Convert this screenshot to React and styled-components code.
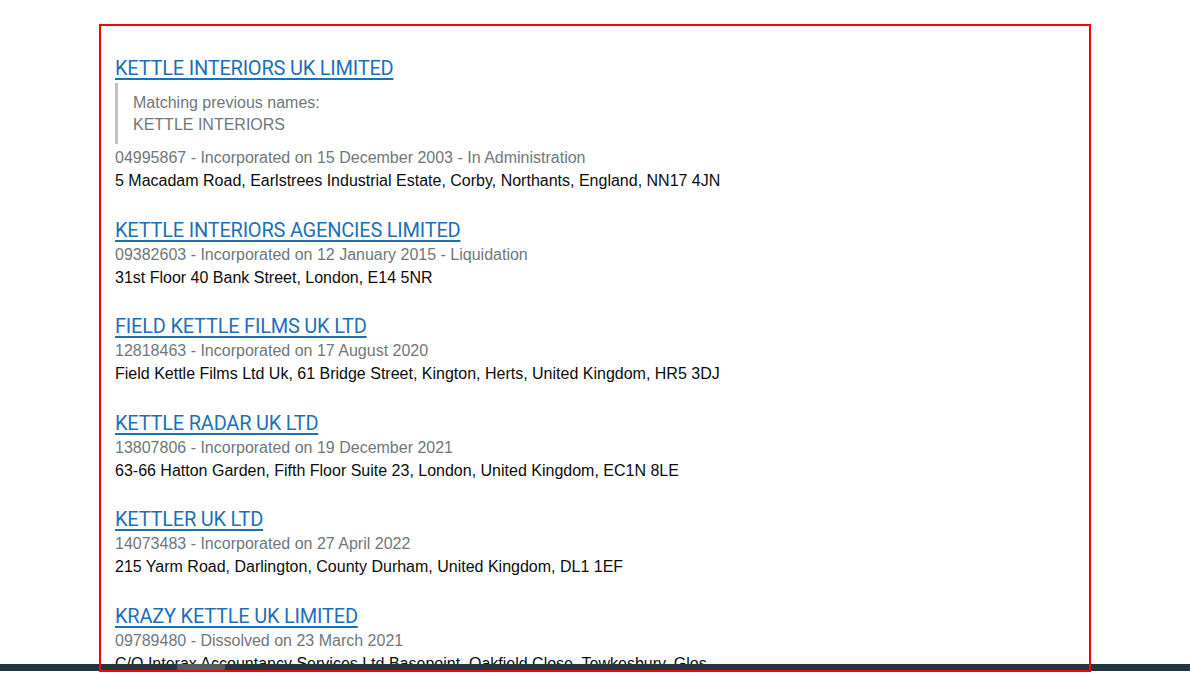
import React from 'react';
import styled, { createGlobalStyle } from 'styled-components';

const GlobalStyle = createGlobalStyle`
  html, body {
    margin: 0;
    padding: 0;
    background: #ffffff;
  }
  body {
    font-family: "Liberation Sans", Arial, sans-serif;
    font-size: 16px;
    color: #0b0c0c;
  }
`;

const StyledResults = styled.section`
  position: relative;
  box-sizing: border-box;
  width: 992px;
  height: 648px;
  margin: 24px auto 0;
  padding: 31px 16px 0 16px;
  overflow: hidden;

  &::after {
    content: '';
    position: absolute;
    inset: 0;
    border: 2px solid #ff0000;
    z-index: 3;
    pointer-events: none;
  }
`;

const StyledList = styled.ul`
  list-style: none;
  margin: 0;
  padding: 0;
`;

const StyledItem = styled.li`
  & + & {
    margin-top: 24.5px;
  }
`;

const StyledTitle = styled.a`
  display: inline-block;
  font-family: Roboto, "Noto Sans", sans-serif;
  font-size: 20px;
  line-height: 26px;
  color: #1d70b8;
  text-decoration: underline;
  text-decoration-thickness: 2px;
  text-underline-offset: 3px;
  letter-spacing: -0.22px;
`;

const StyledPrevious = styled.blockquote`
  margin: 2px 0 2px 0;
  padding: 9px 0 8px 15px;
  border-left: 3px solid #bfc1c3;
  color: #6f777b;
  line-height: 22px;
`;

const StyledMeta = styled.p`
  margin: 0;
  line-height: 23px;
  color: #6f777b;
`;

const StyledAddress = styled.p`
  margin: 0;
  line-height: 23px;
  color: #0b0c0c;
`;

const StyledScrollbar = styled.div`
  position: fixed;
  top: 664px;
  left: 0;
  right: 0;
  height: 7px;
  background: #233540;
  z-index: 2;
`;

const StyledThumb = styled.div`
  margin-left: 177px;
  width: 48px;
  height: 100%;
  background: #4f5e63;
`;

const companies = [
  {
    id: '04995867',
    name: 'KETTLE INTERIORS UK LIMITED',
    previous: 'KETTLE INTERIORS',
    meta: 'Incorporated on 15 December 2003 - In Administration',
    address: '5 Macadam Road, Earlstrees Industrial Estate, Corby, Northants, England, NN17 4JN',
  },
  {
    id: '09382603',
    name: 'KETTLE INTERIORS AGENCIES LIMITED',
    meta: 'Incorporated on 12 January 2015 - Liquidation',
    address: '31st Floor 40 Bank Street, London, E14 5NR',
  },
  {
    id: '12818463',
    name: 'FIELD KETTLE FILMS UK LTD',
    meta: 'Incorporated on 17 August 2020',
    address: 'Field Kettle Films Ltd Uk, 61 Bridge Street, Kington, Herts, United Kingdom, HR5 3DJ',
  },
  {
    id: '13807806',
    name: 'KETTLE RADAR UK LTD',
    meta: 'Incorporated on 19 December 2021',
    address: '63-66 Hatton Garden, Fifth Floor Suite 23, London, United Kingdom, EC1N 8LE',
  },
  {
    id: '14073483',
    name: 'KETTLER UK LTD',
    meta: 'Incorporated on 27 April 2022',
    address: '215 Yarm Road, Darlington, County Durham, United Kingdom, DL1 1EF',
  },
  {
    id: '09789480',
    name: 'KRAZY KETTLE UK LIMITED',
    meta: 'Dissolved on 23 March 2021',
    address: 'C/O Interax Accountancy Services Ltd Basepoint, Oakfield Close, Tewkesbury, Glos',
  },
];

const App = () => (
  <>
    <GlobalStyle />
    <StyledResults>
      <StyledList>
        {companies.map(({ id, name, previous, meta, address }) => (
          <StyledItem key={id}>
            <StyledTitle href={`#${id}`}>{name}</StyledTitle>
            {previous ? (
              <StyledPrevious>
                Matching previous names:
                <br />
                {previous}
              </StyledPrevious>
            ) : null}
            <StyledMeta>
              {id} - {meta}
            </StyledMeta>
            <StyledAddress>{address}</StyledAddress>
          </StyledItem>
        ))}
      </StyledList>
    </StyledResults>
    <StyledScrollbar>
      <StyledThumb />
    </StyledScrollbar>
  </>
);

export default App;
